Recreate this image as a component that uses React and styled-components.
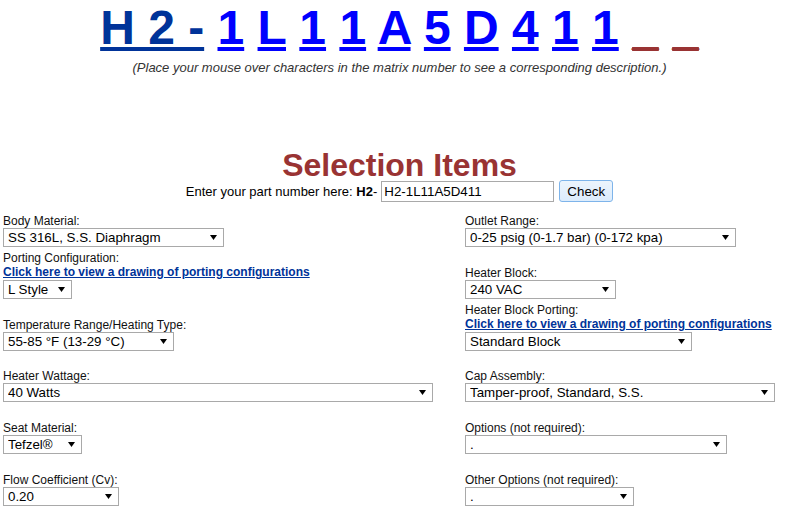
import React from 'react'
import styled, { createGlobalStyle } from 'styled-components'

const GlobalStyle = createGlobalStyle`
  body {
    margin: 0;
    background: #fff;
    color: #000;
    font-family: "Liberation Sans", Arial, Helvetica, sans-serif;
  }
`

const tones = { head: '#003399', code: '#0000ff', blank: '#993333' }

const codeChars = ['1', 'L', '1', '1', 'A', '5', 'D', '4', '1', '1']

const rows = [
  {
    gap: 0,
    left: { label: 'Body Material:', value: 'SS 316L, S.S. Diaphragm', w: 221 },
    right: { label: 'Outlet Range:', value: '0-25 psig (0-1.7 bar) (0-172 kpa)', w: 271 },
  },
  {
    gap: 4,
    left: { label: 'Porting Configuration:', link: true, value: 'L Style', w: 69 },
    right: { label: 'Heater Block:', value: '240 VAC', w: 151 },
  },
  {
    gap: 4,
    left: { label: 'Temperature Range/Heating Type:', value: '55-85 °F (13-29 °C)', w: 171 },
    right: { label: 'Heater Block Porting:', link: true, value: 'Standard Block', w: 227 },
  },
  {
    gap: 18,
    left: { label: 'Heater Wattage:', value: '40 Watts', w: 430 },
    right: { label: 'Cap Assembly:', value: 'Tamper-proof, Standard, S.S.', w: 310 },
  },
  {
    gap: 19,
    left: { label: 'Seat Material:', value: 'Tefzel®', w: 79 },
    right: { label: 'Options (not required):', value: '.', w: 262 },
  },
  {
    gap: 19,
    left: { label: 'Flow Coefficient (Cv):', value: '0.20', w: 116 },
    right: { label: 'Other Options (not required):', value: '.', w: 169 },
  },
]

const Field = ({ label, link, value, w }) => (
  <FieldBox>
    <Label>{label}</Label>
    {link && <DrawingLink href="#">Click here to view a drawing of porting configurations</DrawingLink>}
    <SelectWrap $w={w}>
      <Select defaultValue={value}>
        <option value={value}>{value}</option>
      </Select>
      <Arrow width="7" height="5" viewBox="0 0 7 5">
        <polygon points="0,0 7,0 3.5,5" fill="#000" />
      </Arrow>
    </SelectWrap>
  </FieldBox>
)

const App = () => {
  return (
    <Page>
      <GlobalStyle />
      <Matrix>
        <Char $tone="head">H 2 -</Char>{' '}
        {codeChars.map((c, i) => (
          <React.Fragment key={i}>
            <Char $tone="code">{c}</Char>{' '}
          </React.Fragment>
        ))}
        <Char $tone="blank">_</Char> <Char $tone="blank">_</Char>
      </Matrix>
      <Hint>(Place your mouse over characters in the matrix number to see a corresponding description.)</Hint>

      <Title>Selection Items</Title>
      <PartRow>
        <PartLabel>
          Enter your part number here: <b>H2</b>-
        </PartLabel>
        <PartInput defaultValue="H2-1L11A5D411" />
        <CheckButton type="button">Check</CheckButton>
      </PartRow>

      <Fields>
        {rows.map((r, i) => (
          <Row key={i} $gap={r.gap}>
            <Field {...r.left} />
            <Field {...r.right} />
          </Row>
        ))}
      </Fields>
    </Page>
  )
}

const Page = styled.div`
  width: 793px;
  padding: 0 3px;
`

const Matrix = styled.div`
  text-align: center;
  font-size: 48px;
  font-weight: bold;
  line-height: 55px;
  white-space: nowrap;
`

const Char = styled.a`
  color: ${p => tones[p.$tone]};
  text-decoration: underline;
  cursor: pointer;
`

const Hint = styled.p`
  margin: 5px 0 0;
  text-align: center;
  font-size: 13px;
  line-height: 15px;
  font-style: italic;
  color: #333;
`

const Title = styled.h1`
  margin: 75px 0 0;
  text-align: center;
  font-size: 32px;
  line-height: 30px;
  font-weight: bold;
  color: #993333;
`

const PartRow = styled.div`
  display: flex;
  justify-content: center;
  align-items: center;
  height: 22px;
`

const PartLabel = styled.span`
  font-size: 13px;
  margin-right: 4px;
  b {
    font-weight: bold;
  }
`

const PartInput = styled.input`
  box-sizing: border-box;
  width: 173px;
  height: 21px;
  padding: 1px 2px;
  border: 1px solid #a9a9a9;
  font-family: inherit;
  font-size: 13.33px;
  color: #000;
  outline: none;
`

const CheckButton = styled.button`
  box-sizing: border-box;
  width: 54px;
  height: 22px;
  margin-left: 5px;
  padding: 0;
  border: 1px solid #7eb4ea;
  border-radius: 3px;
  background: linear-gradient(#ecf4fc, #dcecfc);
  font-family: inherit;
  font-size: 13.33px;
  color: #000;
`

const Fields = styled.div`
  display: flex;
  flex-direction: column;
  margin-top: 12px;
`

const Row = styled.div`
  display: grid;
  grid-template-columns: 462px 1fr;
  align-items: end;
  padding-top: ${p => p.$gap}px;
`

const FieldBox = styled.div`
  display: flex;
  flex-direction: column;
  align-items: flex-start;
`

const Label = styled.span`
  font-size: 12px;
  line-height: 14px;
  color: #111;
`

const DrawingLink = styled.a`
  font-size: 12px;
  line-height: 14px;
  font-weight: bold;
  color: #003399;
  text-decoration: underline;
  margin-bottom: 1px;
`

const SelectWrap = styled.div`
  position: relative;
  width: ${p => p.$w}px;
  height: 19px;
`

const Select = styled.select`
  box-sizing: border-box;
  appearance: none;
  width: 100%;
  height: 100%;
  margin: 0;
  padding: 0 0 0 4px;
  border: 1px solid #a9a9a9;
  border-radius: 0;
  background: #fff;
  font-family: inherit;
  font-size: 13.33px;
  color: #000;
  outline: none;
`

const Arrow = styled.svg`
  position: absolute;
  right: 7px;
  top: 7px;
  pointer-events: none;
`

export default App
